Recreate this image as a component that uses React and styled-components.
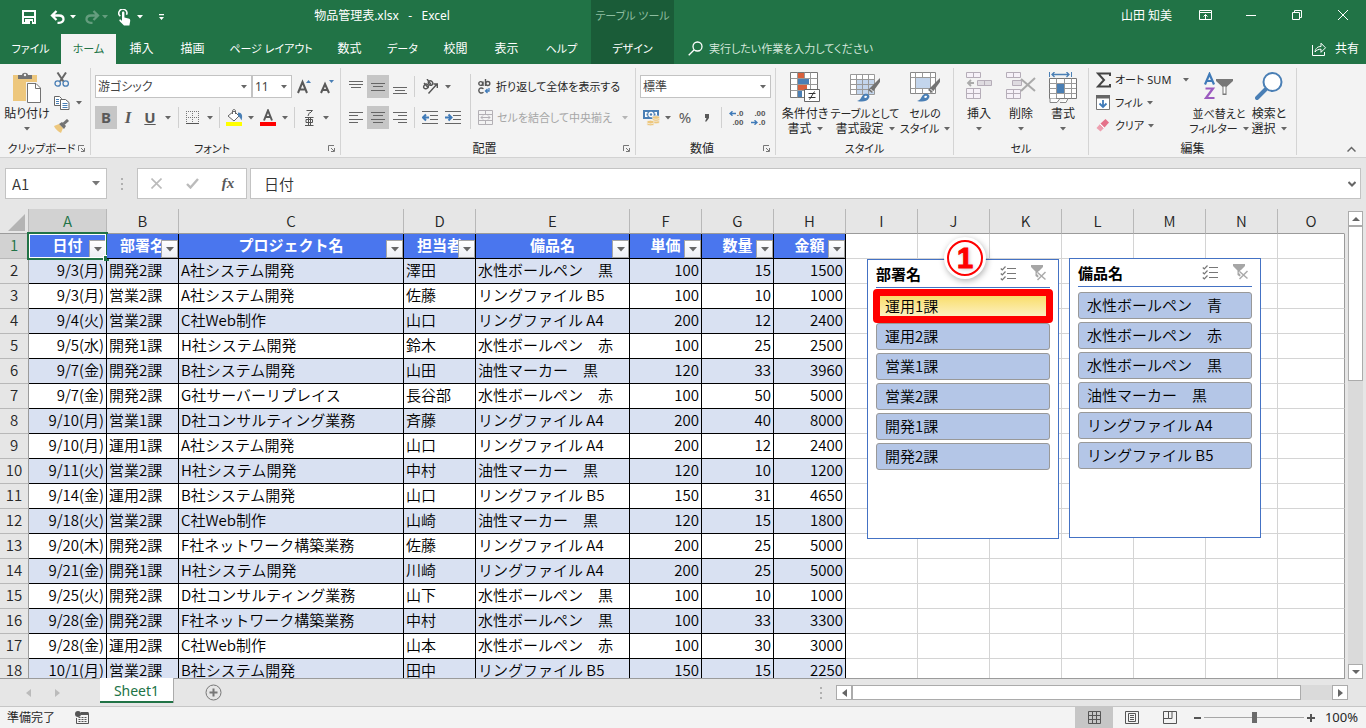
import React from "react";
import styled, { createGlobalStyle, css } from "styled-components";

const GlobalStyle = createGlobalStyle`
  *, *::before, *::after { box-sizing: border-box; }
  body {
    margin: 0;
    background: #e6e6e6;
    color: #262626;
    font-family: "Noto Sans", "Noto Sans CJK JP", sans-serif;
    font-size: 12px;
    line-height: 15px;
    font-feature-settings: "palt";
  }
  button, input, select {
    font: inherit;
    color: inherit;
    font-feature-settings: inherit;
    margin: 0;
    padding: 0;
    border: 0;
    border-radius: 0;
    background: none;
  }
  svg { display: block; flex: none; }
`;

const green = "#217346";
const sheetFont = `"Noto Sans CJK JP", sans-serif`;

/* Labels made mostly of kana are set one size smaller than kanji ones. */
const labelSize = (text) => {
  const kana = (text.match(/[\u3040-\u30ff]/g) || []).length;
  return kana > text.length / 2 ? 11 : 12;
};

/* ---------- window ---------- */

const Window = styled.div`
  display: flex;
  flex-direction: column;
  height: 100vh;
  min-height: 480px;
  overflow: hidden;
`;

const Bar = styled.div`
  display: flex;
  flex: none;
  align-items: stretch;
  background: ${green};
  color: #fff;
  height: ${(p) => p.$h}px;
`;

const QuickAccess = styled.div`
  display: flex;
  align-items: center;
  width: 173px;
  padding-left: 22px;
  gap: 8px;
`;

const IconButton = styled.button`
  display: flex;
  align-items: center;
  justify-content: center;
  flex: none;
  width: ${(p) => p.$w || 22}px;
  height: ${(p) => p.$h || 23}px;
  background: ${(p) => (p.$on ? "#c6c6c6" : "none")};
  opacity: ${(p) => (p.$dim ? 0.3 : 1)};
`;

const Title = styled.div`
  display: flex;
  align-items: center;
  justify-content: center;
  width: 418px;
  white-space: pre;
  padding-bottom: 3px;
`;

const ContextTitle = styled.div`
  display: flex;
  align-items: center;
  justify-content: center;
  width: 83px;
  background: #1a5c38;
  color: #8dbd9f;
  font-size: 11px;
  padding-bottom: 3px;
  white-space: nowrap;
`;

const Spacer = styled.div`
  flex: 1;
`;

const User = styled.div`
  display: flex;
  align-items: center;
  padding: 0 10px 3px 0;
  white-space: nowrap;
`;

const WindowButton = styled.button`
  display: flex;
  align-items: center;
  justify-content: center;
  width: 46px;
  height: 30px;
`;

const Tab = styled.button`
  flex: none;
  width: ${(p) => p.$w}px;
  padding-bottom: 1px;
  white-space: nowrap;
  font-size: ${(p) => labelSize(p.children)}px;
  background: ${(p) => (p.$on ? "#f3f3f3" : p.$context ? "#1a5c38" : "none")};
  color: ${(p) => (p.$on ? green : "#fff")};
`;

const Search = styled.label`
  display: flex;
  align-items: center;
  gap: 6px;
  padding-left: 14px;
  padding-bottom: 1px;
  flex: 1;
  font-size: 11px;
  input { flex: 1; min-width: 0; outline: none; }
  input::placeholder { color: #d3e6da; opacity: 1; }
`;

const Share = styled.button`
  display: flex;
  align-items: center;
  gap: 8px;
  padding: 0 7px 1px;
`;

/* ---------- ribbon ---------- */

const Ribbon = styled.div`
  display: flex;
  flex: none;
  height: 94px;
  padding-top: 4px;
  background: #f3f3f3;
  border-bottom: 1px solid #d2d2d2;
`;

const Group = styled.section`
  display: flex;
  flex-direction: column;
  flex: none;
  width: ${(p) => p.$w}px;
  height: 87px;
  border-right: 1px solid #d4d4d4;
`;

const GroupBody = styled.div`
  display: flex;
  flex: none;
  height: 73px;
  padding: 0 4px;
`;

const GroupLabel = styled.div`
  display: flex;
  align-items: center;
  flex: none;
  height: 14px;
  padding: 0 5px;
  white-space: nowrap;
  font-size: ${(p) => p.$size}px;
  span { flex: 1; text-align: center; }
`;

const Rows = styled.div`
  display: flex;
  flex-direction: column;
  gap: 8px;
  padding-top: 7px;
`;

const Row = styled.div`
  display: flex;
  align-items: center;
  height: 23px;
`;

const SmallStack = styled.div`
  display: flex;
  flex-direction: column;
  padding-left: ${(p) => p.$pad || 0}px;
`;

const BigButton = styled.button`
  display: flex;
  flex-direction: column;
  align-items: center;
  flex: none;
  width: ${(p) => p.$w}px;
  height: 70px;
  padding-top: 4px;
  white-space: nowrap;
  svg.pic { margin-bottom: 3px; }
`;

const Line = styled.span`
  display: flex;
  align-items: center;
  justify-content: center;
  gap: 5px;
  height: 15px;
  font-size: ${(p) => p.$size || 12}px;
`;

const TextButton = styled.button`
  display: flex;
  align-items: center;
  gap: 4px;
  height: 23px;
  white-space: nowrap;
  font-size: 11px;
  color: ${(p) => (p.disabled ? "#a6a6a6" : "#262626")};
  svg:last-child:not(:first-child) { margin-left: ${(p) => p.$gap || 0}px; }
`;

const Divider = styled.span`
  flex: none;
  width: 1px;
  height: 21px;
  margin: 0 3px;
  background: #d0d0d0;
`;

const TallDivider = styled(Divider)`
  height: 55px;
  margin: 6px 7px 0 6px;
`;

const Combo = styled.label`
  display: flex;
  align-items: center;
  flex: none;
  width: ${(p) => p.$w}px;
  height: 23px;
  padding-right: 4px;
  background: #fff;
  border: 1px solid #c3c3c3;
  select {
    flex: 1;
    min-width: 0;
    height: 21px;
    padding-left: 2px;
    appearance: none;
    outline: none;
    color: #444;
  }
`;

const Glyph = styled.span`
  font-family: ${(p) => (p.$serif ? `"Liberation Serif", serif` : `"Noto Sans", sans-serif`)};
  font-size: ${(p) => p.$size || 15}px;
  font-weight: ${(p) => (p.$normal ? 400 : 700)};
  font-style: ${(p) => (p.$italic ? "italic" : "normal")};
  text-decoration: ${(p) => (p.$underline ? "underline" : "none")};
  color: #595959;
`;

const Collapse = styled.button`
  align-self: flex-end;
  margin-left: auto;
  padding: 5px 10px;
`;

/* ---------- formula bar ---------- */

const FormulaBar = styled.div`
  display: flex;
  flex: none;
  height: 51px;
  padding: 10px 5px;
  background: #e6e6e6;
  font-family: ${sheetFont};
  font-size: 15px;
  color: #333;
`;

const Field = styled.label`
  display: flex;
  align-items: center;
  flex: ${(p) => (p.$w ? "none" : 1)};
  width: ${(p) => (p.$w ? p.$w + "px" : "auto")};
  height: 31px;
  padding: 0 ${(p) => (p.$w ? 6 : 4)}px 0 ${(p) => (p.$w ? 6 : 13)}px;
  background: #fff;
  border: 1px solid #c3c3c3;
  input { flex: 1; min-width: 0; outline: none; font-weight: 350; }
`;

const FormulaTools = styled.div`
  display: flex;
  align-items: center;
  width: 110px;
  height: 31px;
  margin-right: 3px;
  background: #fff;
  border: 1px solid #c3c3c3;
`;

const Grip = styled.span`
  display: flex;
  align-items: center;
  justify-content: center;
  width: 30px;
`;

/* ---------- sheet ---------- */

const Workspace = styled.div`
  display: flex;
  flex: 1;
  min-height: 0;
  background: #e6e6e6;
`;

const Viewport = styled.div`
  position: relative;
  flex: 1;
  min-width: 0;
  overflow: hidden;
  background: #fff;
  border-bottom: 1px solid #9b9b9b;
`;

const Sheet = styled.table`
  width: 100%;
  table-layout: fixed;
  border-collapse: separate;
  border-spacing: 0;
  font-family: ${sheetFont};
  font-size: 15px;
  font-weight: 350;
  line-height: 20px;
  font-feature-settings: normal;
  color: #000;
  tr { height: 25px; }
`;

const ColHead = styled.th`
  padding: 0;
  font-weight: 350;
  background: ${(p) => (p.$on ? "#d2d2d2" : "#e6e6e6")};
  color: ${(p) => (p.$on ? green : "#262626")};
  border-right: 1px solid #b8b8b8;
  border-bottom: 1px solid #9b9b9b;
  &:last-child { border-right-color: #e6e6e6; }
`;

const RowHead = styled.th`
  padding: 0 0 2px;
  font-weight: 350;
  background: ${(p) => (p.$on ? "#d2d2d2" : "#e6e6e6")};
  color: ${(p) => (p.$on ? green : "#262626")};
  border-right: 1px solid #9b9b9b;
  border-bottom: 1px solid #b8b8b8;
`;

const Corner = styled.td`
  padding: 0;
  background: #e6e6e6;
  border-right: 1px solid #b8b8b8;
  border-bottom: 1px solid #9b9b9b;
  svg { margin: 3px 3px 0 auto; }
`;

const FieldHead = styled.td`
  position: relative;
  padding: 0 0 2px;
  text-align: center;
  font-weight: 700;
  white-space: nowrap;
  color: #fff;
  background: #4a76ee;
  border-right: 1px solid #000;
  border-bottom: 1px solid #000;
`;

const FilterButton = styled.button`
  position: absolute;
  right: 0;
  bottom: 0;
  display: flex;
  align-items: center;
  justify-content: center;
  width: 17px;
  height: 18px;
  background: linear-gradient(#fff, #eceef4);
  border: 1px solid #a6a6a6;
`;

const Selection = styled.span`
  position: absolute;
  inset: -2px;
  border: 2px solid ${green};
  box-shadow: inset 0 0 0 1px #fff;
  pointer-events: none;
  &::after {
    content: "";
    position: absolute;
    right: -3px;
    bottom: -3px;
    width: 6px;
    height: 6px;
    background: ${green};
    border: solid #fff;
    border-width: 1px 0 0 1px;
  }
`;

const Cell = styled.td`
  padding: 0 2px 2px;
  text-align: ${(p) => (p.$right ? "right" : "left")};
  white-space: nowrap;
  overflow: hidden;
  background: ${(p) => (p.$band ? "#d9e1f2" : "#fff")};
  border-right: 1px solid #000;
  border-bottom: 1px solid #000;
`;

const EmptyCell = styled.td`
  padding: 0;
  border-right: 1px solid #d4d4d4;
  border-bottom: 1px solid #d4d4d4;
  &:last-child { border-right-color: #9b9b9b; }
`;

/* ---------- slicers ---------- */

const Slicer = styled.section`
  position: absolute;
  left: ${(p) => p.$x}px;
  top: ${(p) => p.$y}px;
  width: 192px;
  height: 280px;
  padding: 0 8px;
  background: #fff;
  border: 1px solid #4472c4;
  font-family: ${sheetFont};
  font-size: 15px;
  font-weight: 350;
  font-feature-settings: normal;
  color: #000;
`;

const SlicerHead = styled.header`
  display: flex;
  align-items: center;
  height: 28px;
  margin-bottom: 5px;
  padding-bottom: 1px;
  border-bottom: 1px solid #4472c4;
  h2 { flex: 1; margin: 0; font-size: 15px; font-weight: 700; }
`;

const SlicerList = styled.div`
  display: flex;
  flex-direction: column;
  gap: 3px;
`;

const SlicerItem = styled.button`
  height: 27px;
  padding: 0 8px 3px;
  text-align: left;
  white-space: pre;
  border: 1px solid #999;
  border-radius: 3px;
  background: ${(p) => (p.$on ? "linear-gradient(#f9dc62, #fdf3cd)" : "#b4c6e7")};
`;

const Highlight = styled.div`
  position: absolute;
  left: 5px;
  top: 29px;
  width: 180px;
  height: 34px;
  border: 7px solid #f00;
  border-radius: 4px;
  pointer-events: none;
`;

const Badge = styled.div`
  position: absolute;
  left: 76px;
  top: -23px;
  width: 42px;
  height: 42px;
  padding: 3px;
  border-radius: 50%;
  background: #fff;
  box-shadow: 1px 2px 6px rgba(0, 0, 0, 0.3);
  span {
    display: flex;
    align-items: center;
    justify-content: center;
    width: 36px;
    height: 36px;
    border: 2px solid #f00;
    border-radius: 50%;
    color: #f00;
    font-family: "Liberation Sans", sans-serif;
    font-size: 29px;
    font-weight: 700;
    line-height: 32px;
    text-shadow: 1px 1px 4px rgba(0, 0, 0, 0.25);
    -webkit-text-stroke: 1px #f00;
  }
`;

/* ---------- scroll bars, tabs, status ---------- */

const VScroll = styled.div`
  display: flex;
  flex-direction: column;
  flex: none;
  width: 15px;
  margin: 2px 3px 0;
  background: #dadada;
`;

const HScroll = styled.div`
  display: flex;
  width: 512px;
  height: 15px;
  background: #dadada;
`;

const ScrollButton = styled.button`
  display: flex;
  align-items: center;
  justify-content: center;
  flex: none;
  width: ${(p) => (p.$vertical ? 15 : 16)}px;
  height: 15px;
  background: #fff;
  border: 1px solid #ababab;
`;

const Thumb = styled.div`
  background: #fff;
  border: 1px solid #ababab;
  ${(p) =>
    p.$vertical
      ? css`height: 155px;`
      : css`width: 449px;`}
`;

const SheetBar = styled.div`
  display: flex;
  align-items: center;
  flex: none;
  height: 27px;
  padding-right: 18px;
  background: #e6e6e6;
`;

const SheetNav = styled.div`
  display: flex;
  align-items: center;
  gap: 24px;
  width: 100px;
  padding-left: 26px;
`;

const SheetTab = styled.button`
  position: relative;
  align-self: flex-start;
  width: 73px;
  height: 25px;
  padding-top: 2px;
  margin-top: -1px;
  background: #fff;
  color: ${green};
  font-size: 14px;
  border: solid ${green};
  border-width: 0 0 2px;
  box-shadow: 1px 0 0 #ababab;
`;

const AddSheet = styled.button`
  margin-left: 32px;
`;

const StatusBar = styled.footer`
  display: flex;
  align-items: center;
  flex: none;
  height: 22px;
  padding-left: 7px;
  padding-right: 8px;
  background: #f3f3f3;
  border-top: 1px solid #c6c6c6;
`;

const StatusText = styled.span`
  width: 68px;
  white-space: nowrap;
`;

const ViewButton = styled.button`
  display: flex;
  align-items: center;
  justify-content: center;
  width: 38px;
  height: 21px;
  background: ${(p) => (p.$on ? "#c6c6c6" : "none")};
`;

const Zoom = styled.div`
  display: flex;
  align-items: center;
  gap: 2px;
  margin-left: 3px;
  button { width: 10px; height: 15px; display: flex; align-items: center; justify-content: center; }
  input {
    width: 100px;
    height: 12px;
    appearance: none;
    background: linear-gradient(#a6a6a6, #a6a6a6) center / 100% 1px no-repeat;
  }
  input::-webkit-slider-thumb {
    appearance: none;
    width: 5px;
    height: 11px;
    background: #6a6a6a;
  }
  output { width: 34px; text-align: right; margin-left: 6px; font-size: 13px; }
`;

/* ---------- icons ---------- */

const Svg = ({ w, h, children, ...rest }) => (
  <svg width={w} height={h} viewBox={`0 0 ${w} ${h}`} fill="none" aria-hidden="true" {...rest}>
    {children}
  </svg>
);

const Arrow = ({ color = "#666" }) => (
  <Svg w={6} h={4}><path d="M0 0h6L3 3.6z" fill={color} /></Svg>
);
const Side = ({ right, color = "#666", s = 8 }) => (
  <svg width="5" height={s} viewBox="0 0 5 8" aria-hidden="true">
    <path d={right ? "M0 0l5 4-5 4z" : "M5 0L0 4l5 4z"} fill={color} />
  </svg>
);
const Dots = () => (
  <Svg w={2} h={12}><path d="M0 0h2v2H0zM0 5h2v2H0zM0 10h2v2H0z" fill="#b0b0b0" /></Svg>
);
const Launcher = () => (
  <Svg w={7} h={7} stroke="#777"><path d="M.5 6V.5H6M3 3l3 3M6.500 3v3.500H3" /></Svg>
);

const SaveIcon = () => (
  <Svg w={14} h={14}>
    <path d="M1 1h12v12H1z" stroke="#fff" strokeWidth="2" />
    <path d="M1 6h12v2H1z" fill="#fff" />
    <path d="M3 9h8v5H3z" fill="#fff" /><path d="M8 11h2v3H8z" fill={green} />
  </Svg>
);
const UndoIcon = ({ flip }) => (
  <Svg w={15} h={14} stroke="#fff" strokeWidth="2.300" transform={flip ? "scale(-1 1)" : undefined}>
    <path d="M2 5.500h7c6 0 6 7.300 0 7.300H7.500M6.500 1L2 5.500 6.500 10" />
  </Svg>
);
const TouchIcon = () => (
  <Svg w={14} h={17}>
    <path d="M2.300 7.200A4 4 0 1 1 8.500 5.800" stroke="#fff" strokeWidth="1.500" />
    <path d="M4 3.500c0-1.500 2.400-1.500 2.400 0v5l4 1c1.400.4 2 1 1.800 2.500l-.8 4.500H6L1.500 12c-.6-1 .6-2 1.600-1l.9.900z" fill="#fff" />
  </Svg>
);
const CustomizeIcon = () => (
  <Svg w={5} h={7}><path d="M0 0h5v1.300H0zM0 3h5L2.500 6z" fill="#fff" /></Svg>
);
const RibbonModeIcon = () => (
  <Svg w={13} h={10} stroke="#fff">
    <path d="M.5.5h12v9H.5zM.5 2.500h12M6.500 9V4.500M4.500 6.500l2-2 2 2" />
  </Svg>
);
const MinIcon = () => <Svg w={10} h={10} stroke="#fff"><path d="M0 5.500h10" /></Svg>;
const RestoreIcon = () => (
  <Svg w={10} h={10} stroke="#fff"><path d="M.5 2.500h7v7h-7zM2.500 2.500v-2h7v7h-2" /></Svg>
);
const CloseIcon = () => <Svg w={10} h={10} stroke="#fff"><path d="M0 0l10 10M10 0L0 10" /></Svg>;
const SearchIcon = () => (
  <Svg w={15} h={15} stroke="#fff" strokeWidth="1.300"><circle cx="9.500" cy="5.500" r="4.500" /><path d="M6.200 8.800L.7 14.300" /></Svg>
);
const ShareIcon = () => (
  <Svg w={16} h={14} stroke="#fff">
    <path d="M1.500 3v10.500h12V10M4 10c.5-4 3-5.500 6-5.500V1.200l4.500 4.600-4.500 4.500V7.200C7.500 7.200 5.500 8 4 10z" />
  </Svg>
);

const PasteIcon = () => (
  <Svg w={28} h={31} className="pic">
    <path d="M0 3h24v26H0z" fill="#edc77d" />
    <path d="M5 7V3h4c0-3 6-3 6 0h4v4z" fill="#737373" /><circle cx="12" cy="3" r="1.200" fill="#f3f3f3" />
    <path d="M13 10h11v20H13z" fill="#f3f3f3" />
    <path d="M14.500 11.500H23l4.500 4.500v14.500h-13z" fill="#fff" stroke="#737373" />
    <path d="M22.500 11.500V16.500H27.500" stroke="#737373" />
  </Svg>
);
const CutIcon = () => (
  <Svg w={16} h={15}>
    <path d="M3.500.5l6 9M12 .5l-6 9" stroke="#666" strokeWidth="2" />
    <circle cx="3.700" cy="11.500" r="2.700" stroke="#4a7fb5" strokeWidth="1.300" />
    <circle cx="11.700" cy="11.500" r="2.700" stroke="#4a7fb5" strokeWidth="1.300" />
  </Svg>
);
const CopyIcon = () => (
  <Svg w={16} h={14}>
    <path d="M.5.5h5l2 2v7h-7z" fill="#fff" stroke="#666" />
    <path d="M2 3.500h3M2 5.500h3M2 7.500h3" stroke="#4a7fb5" />
    <path d="M6.500 3.500h5l3.500 3v7H6.500z" fill="#fff" stroke="#666" />
    <path d="M8.500 7.500h5M8.500 9.500h5M8.500 11.500h5" stroke="#4a7fb5" />
  </Svg>
);
const PainterIcon = () => (
  <Svg w={16} h={14}>
    <path d="M0 7l5-2 4 4-2 5C5 13 1 10 0 7z" fill="#edc77d" />
    <path d="M5 5l3-2 4 4-2 3z" fill="#737373" /><path d="M9.500 5l4.500-4" stroke="#737373" strokeWidth="3" />
  </Svg>
);
const FontSizeIcon = ({ small }) => (
  <Svg w={15} h={16}>
    <path d={small ? "M1 14L5 5l4 9M2.700 11h4.600" : "M1 14L5.500 3 10 14M2.500 10.500h6"} stroke="#595959" strokeWidth="2" />
    <path d={small ? "M9 1h5l-2.500 3z" : "M9 4h5l-2.500-3z"} fill="#4a7fb5" />
  </Svg>
);
const BordersIcon = () => (
  <Svg w={14} h={14}>
    <path d="M0 .5h13M0 6.500h13M.5 0v13M6.500 0v13M12.500 0v13" stroke="#777" strokeDasharray="1 1" />
    <path d="M0 12.500h13" stroke="#555" />
  </Svg>
);
const FillIcon = () => (
  <Svg w={17} h={17}>
    <path d="M2 7l6-5 5 5-5 5z" fill="#fff" stroke="#666" /><path d="M6.500 5V2c0-2 3-2 3 0v3" stroke="#666" />
    <path d="M12 3.500c4 0 5 3 3.500 8-1-2.500-2-3.500-3.500-4.500z" fill="#4a7fb5" />
    <path d="M0 13h16v4H0z" fill="#ff0" />
  </Svg>
);
const FontColorIcon = () => (
  <Svg w={16} h={17}>
    <path d="M4 11.500L8 1.500l4 10M5.500 8h5" stroke="#595959" strokeWidth="2" />
    <path d="M0 13h16v4H0z" fill="#f00" />
  </Svg>
);
const PhoneticIcon = () => (
  <Svg w={9} h={16} stroke="#555" strokeWidth="1">
    <path d="M1.500.5h6L5 3M4.500 2.500L3 6M0 7.500h8.500M1 9.500h6.500v3H1zM3.500 7.500v7.500M5.500 7.500v7.500M0 15.500h8.500" />
  </Svg>
);
const LinesIcon = ({ rows }) => (
  <Svg w={14} h={14} stroke="#666">
    {rows.map(([x, y, len]) => <path key={y} d={`M${x} ${y + 0.5}h${len}`} />)}
  </Svg>
);
const OrientIcon = () => (
  <Svg w={17} h={15} stroke="#555" strokeWidth="1.400">
    <path d="M6.500 14.500L15 5M11.500 5H15.300V9" />
    <ellipse cx="4" cy="7.500" rx="2.500" ry="2" transform="rotate(-45 4 7.500)" /><path d="M2 4l4.500 5" />
    <ellipse cx="8.500" cy="4" rx="2" ry="2.400" transform="rotate(-45 8.500 4)" /><path d="M5 0l4 5.500" />
  </Svg>
);
const IndentIcon = ({ right }) => (
  <Svg w={16} h={13}>
    <path d="M0 .5h16M8 4.500h8M8 8.500h8M0 12.500h16" stroke="#666" />
    <path d={right ? "M0 6.500h6M3.500 3.500l3 3-3 3" : "M7 6.500H1M4 3.500l-3 3 3 3"} stroke="#3f7ab8" strokeWidth="2" />
  </Svg>
);
const WrapIcon = () => (
  <Svg w={14} h={15}>
    <g stroke="#555" strokeWidth="1.400">
      <circle cx="2.700" cy="4.500" r="1.900" /><path d="M5 2.500v4.500M7.500 0v7" /><circle cx="9.800" cy="4.500" r="2" />
      <path d="M5.500 9.800C3 8 .8 9.500.8 11.500s2.200 3.500 4.700 1.700" />
    </g>
    <path d="M11 9v3H8M9.500 10l-2 2 2 2" stroke="#3f7ab8" strokeWidth="1.300" />
  </Svg>
);
const MergeIcon = () => (
  <Svg w={15} h={15} stroke="#b3b0b5">
    <path d="M.5.5h14v14H.5zM.5 4.500h14M.5 10.500h14M7.500.5v4M7.500 10.500v4M3 7.500h9M5 5.500l-2 2 2 2M10 5.500l2 2-2 2" />
  </Svg>
);
const CurrencyIcon = () => (
  <Svg w={17} h={16}>
    <path d="M0 0h16v9H0z" fill="#4a7fb5" />
    <path d="M2 2h2.500v1.500H3.500v2h1V7H2zM14 2h-2.500v1.500h1v2H14z" fill="#fff" />
    <circle cx="8" cy="4.500" r="2.700" fill="#fff" /><circle cx="8" cy="4.500" r="1.200" fill="#4a7fb5" />
    <g fill="#edc77d" stroke="#f3f3f3" strokeWidth=".7">
      <ellipse cx="13" cy="12" rx="3.700" ry="1.800" /><ellipse cx="13" cy="9.500" rx="3.700" ry="1.800" /><ellipse cx="13" cy="7.500" rx="3.700" ry="1.800" />
      <ellipse cx="7.500" cy="14" rx="3.700" ry="1.800" /><ellipse cx="7.500" cy="12" rx="3.700" ry="1.800" />
    </g>
  </Svg>
);
const DecimalStack = styled.span`
  display: flex;
  flex-direction: column;
  width: 15px;
  font-family: "Liberation Sans", sans-serif;
  font-size: 8px;
  line-height: 9px;
  font-weight: 700;
  color: #555;
  span { display: flex; align-items: center; justify-content: space-between; }
  span.end { justify-content: flex-end; }
`;
const DecArrow = ({ right }) => (
  <Svg w={7} h={5} stroke="#3f7ab8" strokeWidth="1.400"><path d={right ? "M0 2.500h6M3.500.3L6 2.500 3.500 4.700" : "M7 2.500H1M3.500.3L1 2.500l2.500 2.200"} /></Svg>
);

const gridLines = (w, h, sx, sy) => {
  let d = "";
  for (let x = 0; x <= w; x += sx) d += `M${x + 0.5} .5v${h}`;
  for (let y = 0; y <= h; y += sy) d += `M.5 ${y + 0.5}h${w}`;
  return d;
};
const CondIcon = () => (
  <Svg w={31} h={31} className="pic">
    <path d="M.5.5h27v25H.5z" fill="#fff" stroke="#777" />
    <path d="M.5 6.500h27M.5 12.500h27M.5 18.500h27M7.500.5v25M14.500.5v25M20.500.5v25" stroke="#999" />
    <path d="M8 1h6v5H8zM8 13h9v5H8z" fill="#d8603c" /><path d="M8 7h11v5H8zM8 19h4v6H8z" fill="#4a7fb5" />
    <path d="M14.500 17.500h15v12h-15z" fill="#fff" stroke="#666" />
    <path d="M18.500 21.500h7M18.500 25.500h7M24.500 19.500l-5 8" stroke="#333" />
  </Svg>
);
const brush = (
  <>
    <path d="M30 6v4l-8 11-4-3z" fill="#737373" /><path d="M20.500 17l3 3" stroke="#fff" />
    <path d="M7 29c4-1 4-4 6-6 3-3 8 0 6 3-2 4-7 4-12 3z" fill="#4a7fb5" />
    <path d="M14 25c1-2 3-1.500 3-.5 0 1.500-2 2-3 .5z" fill="#fff" />
  </>
);
const TableStyleIcon = () => (
  <Svg w={31} h={31} className="pic">
    <path d="M.5 2.500h24v21H.5z" fill="#fff" /><path d="M7 8h17v15H7z" fill="#c3d5ec" />
    <g transform="translate(0 2)"><path d={gridLines(24, 20, 6, 5)} stroke="#999" /></g>{brush}
  </Svg>
);
const CellStyleIcon = () => (
  <Svg w={31} h={31} className="pic">
    <path d="M.5.5h25v21H.5z" fill="#fff" stroke="#888" />
    <path d="M.5 5.500h25M.5 16.500h25M5.500.5v21M20.500.5v21M12.500.5v5M12.500 16.500v5" stroke="#999" />
    <path d="M6 6h14v10H6z" fill="#c3d5ec" />{brush}
  </Svg>
);
const InsertIcon = () => (
  <Svg w={27} h={31} className="pic" stroke="#b5adb8">
    <path d="M.5.500h14v5h-14zM7.500.5v5M.5 16.500h14v10h-14zM.5 21.500h14M7.500 16.500v10" fill="#f6f1f8" />
    <path d="M11.500 8.500h14v5h-14zM18.500 8.500v5" fill="#dedbe0" /><path d="M8 11H2M5 8l-3 3 3 3" stroke="#aaa" strokeWidth="1.800" />
  </Svg>
);
const DeleteIcon = () => (
  <Svg w={30} h={31} className="pic" stroke="#b5adb8">
    <path d="M.5.500h14v5h-14zM7.500.5v5M.5 17.500h14v9h-14zM.5 21.500h14M7.500 17.500v9" fill="#f6f1f8" />
    <path d="M6.500 8.500h9v5h-9z" fill="#dedbe0" /><path d="M15 7l14 12M29 6L15 19" stroke="#aaa" strokeWidth="2" />
  </Svg>
);
const FormatIcon = () => (
  <Svg w={28} h={31} className="pic">
    <path d="M.5 0v5M22.500 0v5" stroke="#4a7fb5" /><path d="M3 2.500h17M5.500 0L3 2.500 5.500 5M17.500 0L20 2.500 17.500 5" stroke="#4a7fb5" strokeWidth="1.300" />
    <path d="M.5 6.500h27v20H.5z" fill="#fff" stroke="#777" />
    <path d="M.5 11.500h27M.5 21.500h27M7.500 6.500v20M15.500 6.500v20M22.500 6.500v20M15 16.500h12M.5 16.500h7" stroke="#999" />
    <path d="M8 12h7v9H8z" fill="#4a7fb5" />
    <path d="M1 26.500v4h7l3-4h-4M11 30.500h6l2-4" stroke="#888" fill="#fff" />
  </Svg>
);
const SigmaIcon = () => (
  <Svg w={15} h={16}><path d="M14 4V1.500H2L8 8l-6 6.500h12V12" stroke="#444" strokeWidth="2" /></Svg>
);
const FillDownIcon = () => (
  <Svg w={15} h={15}>
    <path d="M.5.5h13v14H.5z" fill="#fff" stroke="#777" /><path d="M0 0h14v3.500H0z" fill="#666" />
    <path d="M7 5v7M3.500 8.500L7 12l3.500-3.500" stroke="#3f7ab8" strokeWidth="1.800" />
  </Svg>
);
const EraserIcon = () => (
  <Svg w={15} h={13}>
    <path d="M9.500 0L13 3.500 8.500 8.500 4.500 4.500z" fill="#e5728a" /><path d="M4 5l4 4-3.500 3.500L.5 9z" fill="#eea0b0" /><path d="M3.800 4.800l4.500 4.500" stroke="#fff" />
  </Svg>
);
const SortIcon = () => (
  <Svg w={30} h={31} className="pic">
    <path d="M1 12.500L5.500 2 10 12.500M2.800 9h5.400" stroke="#3f7ab8" strokeWidth="2.200" />
    <path d="M1.500 16.500H9L2 26h8.500" stroke="#9b5bbf" strokeWidth="2.200" />
    <path d="M12 7h17v2l-6.500 6v8h-4v-8L12 9z" fill="#777" /><path d="M20.500 14.500v7" stroke="#fff" strokeWidth="2" />
  </Svg>
);
const FindIcon = () => (
  <Svg w={28} h={31} className="pic" stroke="#4a7fb5">
    <circle cx="17.500" cy="10" r="9" fill="#fff" strokeWidth="2" /><path d="M10.500 17.500L2 26" strokeWidth="4" strokeLinecap="round" />
  </Svg>
);
const MultiIcon = () => (
  <Svg w={17} h={15} stroke="#777">
    <path d="M7 2.500h9M7 7.500h9M7 12.500h9" />
    <path d="M.8 2.500l1.500 1.500L5.500.5M.8 7.500l1.500 1.500 3.200-3.500M.8 12.500l1.500 1.500 3.200-3.500" strokeWidth="1.200" />
  </Svg>
);
const ClearFilterIcon = () => (
  <Svg w={16} h={16}>
    <path d="M0 0h12v2L7.500 6.500V13l-3-2V6.500L0 2z" fill="#a6a6a6" />
    <path d="M6.500 7.500l8 7M14.500 7l-8 8" stroke="#fff" strokeWidth="3" /><path d="M6.500 7.500l8 7M14.500 7l-8 8" stroke="#aaa" strokeWidth="1.500" />
  </Svg>
);

/* Each line of an alignment icon: start x, y, length. */
const alignLines = {
  top: [[0, 1, 14], [0, 4, 14], [2, 7, 10]],
  mid: [[0, 3, 14], [2, 6, 10], [0, 10, 14]],
  bottom: [[0, 7, 14], [2, 10, 10], [0, 13, 14]],
  left: [[0, 1, 14], [0, 4, 9], [0, 8, 14], [0, 11, 9]],
  center: [[0, 1, 14], [2, 4, 10], [0, 8, 14], [2, 11, 10]],
  right: [[0, 1, 14], [5, 4, 9], [0, 8, 14], [5, 11, 9]],
};

/* ---------- data ---------- */

const tabs = [
  ["ファイル", 61], ["ホーム", 55], ["挿入", 51], ["描画", 51], ["ページ レイアウト", 106],
  ["数式", 51], ["データ", 55], ["校閲", 51], ["表示", 51], ["ヘルプ", 59],
];
const colWidths = [78, 72, 225, 72, 154, 72, 72, 72, 72, 72, 72, 72, 72, 72];
const letters = "ABCDEFGHIJKLMNO".split("");
const fields = ["日付", "部署名", "プロジェクト名", "担当者", "備品名", "単価", "数量", "金額"];
const pen = "水性ボールペン　";
const records = [
  ["9/3(月)", "開発2課", "A社システム開発", "澤田", pen + "黒", 100, 15, 1500],
  ["9/3(月)", "営業2課", "A社システム開発", "佐藤", "リングファイル B5", 100, 10, 1000],
  ["9/4(火)", "営業2課", "C社Web制作", "山口", "リングファイル A4", 200, 12, 2400],
  ["9/5(水)", "開発1課", "H社システム開発", "鈴木", pen + "赤", 100, 25, 2500],
  ["9/7(金)", "開発2課", "B社システム開発", "山田", "油性マーカー　黒", 120, 33, 3960],
  ["9/7(金)", "開発2課", "G社サーバーリプレイス", "長谷部", pen + "赤", 100, 50, 5000],
  ["9/10(月)", "営業1課", "D社コンサルティング業務", "斉藤", "リングファイル A4", 200, 40, 8000],
  ["9/10(月)", "運用1課", "A社システム開発", "山口", "リングファイル A4", 200, 12, 2400],
  ["9/11(火)", "営業2課", "H社システム開発", "中村", "油性マーカー　黒", 120, 10, 1200],
  ["9/14(金)", "運用2課", "B社システム開発", "山口", "リングファイル B5", 150, 31, 4650],
  ["9/18(火)", "営業2課", "C社Web制作", "山崎", "油性マーカー　黒", 120, 15, 1800],
  ["9/20(木)", "開発2課", "F社ネットワーク構築業務", "佐藤", "リングファイル A4", 200, 25, 5000],
  ["9/21(金)", "開発1課", "H社システム開発", "川崎", "リングファイル A4", 200, 25, 5000],
  ["9/25(火)", "開発2課", "D社コンサルティング業務", "山下", pen + "黒", 100, 10, 1000],
  ["9/28(金)", "開発2課", "F社ネットワーク構築業務", "中村", pen + "黒", 100, 33, 3300],
  ["9/28(金)", "運用2課", "C社Web制作", "山本", pen + "赤", 100, 30, 3000],
  ["10/1(月)", "営業2課", "B社システム開発", "田中", "リングファイル B5", 150, 15, 2250],
];
const departments = ["運用1課", "運用2課", "営業1課", "営業2課", "開発1課", "開発2課"];
const supplies = [pen + "青", pen + "赤", pen + "黒", "油性マーカー　黒", "リングファイル A4", "リングファイル B5"];

/* ---------- parts ---------- */

const Drop = ({ w = 12, color, dim, label = "その他" }) => (
  <IconButton $w={w} $dim={dim} aria-label={label}><Arrow color={color} /></IconButton>
);

const RibbonGroup = ({ label, width, launcher, children }) => (
  <Group $w={width}>
    <GroupBody>{children}</GroupBody>
    <GroupLabel $size={labelSize(label)}><span>{label}</span>{launcher && <Launcher />}</GroupLabel>
  </Group>
);

const Big = ({ icon, w, lines }) => (
  <BigButton $w={w}>
    {icon}
    <Line $size={labelSize(lines[0])}>{lines[0]}</Line>
    <Line $size={labelSize(lines[1])}>{lines[1]}<Arrow /></Line>
  </BigButton>
);

const SlicerPanel = ({ title, items, selected, x, y, children }) => (
  <Slicer $x={x} $y={y}>
    <SlicerHead>
      <h2>{title}</h2>
      <IconButton $w={40} aria-label="複数選択"><MultiIcon /></IconButton>
      <IconButton $w={22} aria-label="フィルターのクリア"><ClearFilterIcon /></IconButton>
    </SlicerHead>
    <SlicerList>
      {items.map((t) => <SlicerItem key={t} $on={t === selected}>{t}</SlicerItem>)}
    </SlicerList>
    {children}
  </Slicer>
);

export default function App() {
  return (
    <Window>
      <GlobalStyle />
      <Bar $h={34}>
        <QuickAccess>
          <IconButton $w={14} aria-label="上書き保存"><SaveIcon /></IconButton>
          <Row>
            <IconButton $w={26} aria-label="元に戻す"><UndoIcon /></IconButton>
            <Drop w={6} color="#fff" />
          </Row>
          <Row>
            <IconButton $w={16} $dim aria-label="やり直し"><UndoIcon flip /></IconButton>
            <Drop w={10} color="#fff" dim />
          </Row>
          <Row>
            <IconButton $w={14} aria-label="タッチ/マウス モード"><TouchIcon /></IconButton>
            <Drop w={16} color="#fff" />
          </Row>
          <IconButton $w={10} aria-label="クイック アクセス ツール バーのユーザー設定"><CustomizeIcon /></IconButton>
        </QuickAccess>
        <Title>{"物品管理表.xlsx   -   Excel"}</Title>
        <ContextTitle>テーブル ツール</ContextTitle>
        <Spacer />
        <User>山田 知美</User>
        <WindowButton aria-label="リボンの表示オプション"><RibbonModeIcon /></WindowButton>
        <WindowButton aria-label="最小化"><MinIcon /></WindowButton>
        <WindowButton aria-label="元のサイズに戻す"><RestoreIcon /></WindowButton>
        <WindowButton aria-label="閉じる"><CloseIcon /></WindowButton>
      </Bar>
      <Bar $h={30}>
        {tabs.map(([t, w]) => <Tab key={t} $w={w} $on={t === "ホーム"}>{t}</Tab>)}
        <Tab $w={83} $context>デザイン</Tab>
        <Search>
          <SearchIcon />
          <input type="text" placeholder="実行したい作業を入力してください" aria-label="操作アシスト" />
        </Search>
        <Share><ShareIcon />共有</Share>
      </Bar>

      <Ribbon>
        <RibbonGroup label="クリップボード" width={91} launcher>
          <BigButton $w={46}>
            <PasteIcon />
            <Line>貼り付け</Line>
            <Line><Arrow /></Line>
          </BigButton>
          <SmallStack>
            <IconButton $w={24} aria-label="切り取り"><CutIcon /></IconButton>
            <Row><IconButton $w={24} aria-label="コピー"><CopyIcon /></IconButton><Drop w={10} /></Row>
            <IconButton $w={24} aria-label="書式のコピー/貼り付け"><PainterIcon /></IconButton>
          </SmallStack>
        </RibbonGroup>

        <RibbonGroup label="フォント" width={250} launcher>
          <Rows>
            <Row>
              <Combo $w={157}><select aria-label="フォント"><option>游ゴシック</option></select><Arrow /></Combo>
              <Combo $w={40}><select aria-label="フォント サイズ"><option>11</option></select><Arrow /></Combo>
              <IconButton $w={24} aria-label="フォント サイズの拡大"><FontSizeIcon /></IconButton>
              <IconButton aria-label="フォント サイズの縮小"><FontSizeIcon small /></IconButton>
            </Row>
            <Row>
              <IconButton $on aria-label="太字"><Glyph>B</Glyph></IconButton>
              <IconButton aria-label="斜体"><Glyph $serif $italic $size={17}>I</Glyph></IconButton>
              <IconButton aria-label="下線"><Glyph $underline>U</Glyph></IconButton>
              <Drop w={14} />
              <Divider />
              <IconButton aria-label="罫線"><BordersIcon /></IconButton>
              <Drop />
              <Divider />
              <IconButton aria-label="塗りつぶしの色"><FillIcon /></IconButton>
              <Drop />
              <IconButton aria-label="フォントの色"><FontColorIcon /></IconButton>
              <Drop />
              <Divider />
              <IconButton aria-label="ふりがな"><PhoneticIcon /></IconButton>
              <Drop />
            </Row>
          </Rows>
        </RibbonGroup>

        <RibbonGroup label="配置" width={295} launcher>
          <Rows>
            <Row>
              <IconButton aria-label="上揃え"><LinesIcon rows={alignLines.top} /></IconButton>
              <IconButton $on aria-label="上下中央揃え"><LinesIcon rows={alignLines.mid} /></IconButton>
              <IconButton aria-label="下揃え"><LinesIcon rows={alignLines.bottom} /></IconButton>
              <Divider />
              <IconButton $w={24} aria-label="方向"><OrientIcon /></IconButton>
              <Drop />
            </Row>
            <Row>
              <IconButton aria-label="左揃え"><LinesIcon rows={alignLines.left} /></IconButton>
              <IconButton $on aria-label="中央揃え"><LinesIcon rows={alignLines.center} /></IconButton>
              <IconButton aria-label="右揃え"><LinesIcon rows={alignLines.right} /></IconButton>
              <Divider />
              <IconButton $w={24} aria-label="インデントを減らす"><IndentIcon /></IconButton>
              <IconButton aria-label="インデントを増やす"><IndentIcon right /></IconButton>
            </Row>
          </Rows>
          <TallDivider />
          <Rows>
            <TextButton><WrapIcon />折り返して全体を表示する</TextButton>
            <TextButton disabled $gap={6}><MergeIcon />セルを結合して中央揃え<Arrow color="#b5b5b5" /></TextButton>
          </Rows>
        </RibbonGroup>

        <RibbonGroup label="数値" width={140} launcher>
          <Rows>
            <Combo $w={131}><select aria-label="表示形式"><option>標準</option></select><Arrow /></Combo>
            <Row>
              <IconButton aria-label="通貨表示形式"><CurrencyIcon /></IconButton>
              <Drop />
              <IconButton aria-label="パーセント スタイル"><Glyph $normal>%</Glyph></IconButton>
              <IconButton aria-label="桁区切りスタイル">
                <Svg w={6} h={8}><path d="M1 0h4v4L2.500 7.500H1L2.500 4H1z" fill="#595959" /></Svg>
              </IconButton>
              <Divider />
              <IconButton aria-label="小数点以下の表示桁数を増やす">
                <DecimalStack><span><DecArrow />.0</span><span className="end">.00</span></DecimalStack>
              </IconButton>
              <IconButton aria-label="小数点以下の表示桁数を減らす">
                <DecimalStack><span className="end">.00</span><span><DecArrow right />.0</span></DecimalStack>
              </IconButton>
            </Row>
          </Rows>
        </RibbonGroup>

        <RibbonGroup label="スタイル" width={178}>
          <Big w={50} icon={<CondIcon />} lines={["条件付き", "書式"]} />
          <Big w={70} icon={<TableStyleIcon />} lines={["テーブルとして", "書式設定"]} />
          <Big w={50} icon={<CellStyleIcon />} lines={["セルの", "スタイル"]} />
        </RibbonGroup>

        <RibbonGroup label="セル" width={135}>
          <Big w={42} icon={<InsertIcon />} lines={["挿入", ""]} />
          <Big w={42} icon={<DeleteIcon />} lines={["削除", ""]} />
          <Big w={42} icon={<FormatIcon />} lines={["書式", ""]} />
        </RibbonGroup>

        <RibbonGroup label="編集" width={208}>
          <SmallStack $pad={3}>
            <TextButton $gap={8}><SigmaIcon />オート SUM<Arrow /></TextButton>
            <TextButton><FillDownIcon />フィル<Arrow /></TextButton>
            <TextButton><EraserIcon />クリア<Arrow /></TextButton>
          </SmallStack>
          <Spacer />
          <Big w={54} icon={<SortIcon />} lines={["並べ替えと", "フィルター"]} />
          <Big w={46} icon={<FindIcon />} lines={["検索と", "選択"]} />
        </RibbonGroup>
        <Collapse aria-label="リボンを折りたたむ">
          <Svg w={9} h={6} stroke="#666" strokeWidth="1.500"><path d="M.5 5.500l4-4 4 4" /></Svg>
        </Collapse>
      </Ribbon>

      <FormulaBar>
        <Field $w={102}><input aria-label="名前ボックス" defaultValue="A1" /><Svg w={8} h={5}><path d="M0 0h8L4 4.500z" fill="#777" /></Svg></Field>
        <Grip><Dots /></Grip>
        <FormulaTools>
          <IconButton $w={36} aria-label="キャンセル"><Svg w={11} h={11} stroke="#bbb" strokeWidth="1.600"><path d="M.5.5l10 10M10.500.5l-10 10" /></Svg></IconButton>
          <IconButton $w={36} aria-label="入力"><Svg w={13} h={11} stroke="#bbb" strokeWidth="2.400"><path d="M1 6l3.500 3.500L12 1" /></Svg></IconButton>
          <IconButton $w={36} aria-label="関数の挿入"><Glyph $serif $italic>fx</Glyph></IconButton>
        </FormulaTools>
        <Field>
          <input aria-label="数式バー" defaultValue="日付" />
          <Svg w={8} h={6} stroke="#666" strokeWidth="2"><path d="M.5 1l3.500 3.500L7.500 1" /></Svg>
        </Field>
      </FormulaBar>

      <Workspace>
        <Viewport>
          <Sheet>
            <colgroup>
              <col width="29" />
              {colWidths.map((w, i) => <col key={i} width={w} />)}
              <col />
            </colgroup>
            <thead>
              <tr>
                <Corner><Svg w={17} h={17}><path d="M17 0v17H0z" fill="#b4b4b4" /></Svg></Corner>
                {letters.map((l, i) => <ColHead key={l} scope="col" $on={i === 0}>{l}</ColHead>)}
              </tr>
            </thead>
            <tbody>
              <tr>
                <RowHead scope="row" $on>1</RowHead>
                {fields.map((f, i) => (
                  <FieldHead key={f}>
                    {f}
                    <FilterButton aria-label={f + "のフィルター"}><Svg w={8} h={5}><path d="M0 0h8L4 4.500z" fill="#666" /></Svg></FilterButton>
                    {i === 0 && <Selection />}
                  </FieldHead>
                ))}
                {letters.slice(8).map((l) => <EmptyCell key={l} />)}
              </tr>
              {records.map((r, n) => (
                <tr key={n}>
                  <RowHead scope="row">{n + 2}</RowHead>
                  {r.map((v, i) => <Cell key={i} $band={n % 2 === 0} $right={i === 0 || i > 4}>{v}</Cell>)}
                  {letters.slice(8).map((l) => <EmptyCell key={l} />)}
                </tr>
              ))}
            </tbody>
          </Sheet>
          <SlicerPanel title="部署名" items={departments} selected="運用1課" x={867} y={50}>
            <Highlight />
            <Badge><span>1</span></Badge>
          </SlicerPanel>
          <SlicerPanel title="備品名" items={supplies} x={1069} y={49} />
        </Viewport>
        <VScroll>
          <ScrollButton $vertical aria-label="上へ"><Svg w={8} h={4}><path d="M0 4h8L4 0z" fill="#666" /></Svg></ScrollButton>
          <Thumb $vertical />
          <Spacer />
          <ScrollButton $vertical aria-label="下へ"><Svg w={8} h={4}><path d="M0 0h8L4 4z" fill="#666" /></Svg></ScrollButton>
        </VScroll>
      </Workspace>

      <SheetBar>
        <SheetNav><Side color="#bbb" /><Side right color="#bbb" /></SheetNav>
        <SheetTab>Sheet1</SheetTab>
        <AddSheet aria-label="新しいシート">
          <Svg w={17} h={17} stroke="#777"><circle cx="8.500" cy="8.500" r="7.500" /><path d="M4.500 8.500h8M8.500 4.500v8" strokeWidth="2" /></Svg>
        </AddSheet>
        <Spacer />
        <Grip><Dots /></Grip>
        <HScroll>
          <ScrollButton aria-label="左へ"><Side /></ScrollButton>
          <Thumb />
          <Spacer />
          <ScrollButton aria-label="右へ"><Side right /></ScrollButton>
        </HScroll>
      </SheetBar>

      <StatusBar>
        <StatusText>準備完了</StatusText>
        <Svg w={14} h={13}>
          <path d="M3 2.500h10.500v10H1.500V7" stroke="#555" /><path d="M6 1h7.500v3H6z" fill="#555" /><circle cx="3" cy="3" r="3" fill="#555" />
          <path d="M3.500 6.500h8M3.500 8.500h8M3.500 10.500h8" stroke="#555" strokeDasharray="2 1" />
        </Svg>
        <Spacer />
        <ViewButton $on aria-label="標準"><Svg w={13} h={13} stroke="#555"><path d={gridLines(12, 12, 4, 4)} /></Svg></ViewButton>
        <ViewButton aria-label="ページ レイアウト"><Svg w={14} h={13} stroke="#555"><path d="M.5.5h13v12H.5zM3.500 2.500h7v8h-7zM5 4.500h4M5 6.500h4M5 8.500h4" /></Svg></ViewButton>
        <ViewButton aria-label="改ページ プレビュー"><Svg w={14} h={13} stroke="#555"><path d="M.5.5h13v12H.5zM5.500.5v7h3.500v-7M.5 7.500h5" /></Svg></ViewButton>
        <Zoom>
          <button aria-label="縮小"><Svg w={7} h={2}><path d="M0 0h7v2H0z" fill="#555" /></Svg></button>
          <input type="range" min="0" max="100" defaultValue="50" aria-label="ズーム" />
          <button aria-label="拡大"><Svg w={8} h={8} stroke="#555" strokeWidth="2"><path d="M4 0v8M0 4h8" /></Svg></button>
          <output>100%</output>
        </Zoom>
      </StatusBar>
    </Window>
  );
}
